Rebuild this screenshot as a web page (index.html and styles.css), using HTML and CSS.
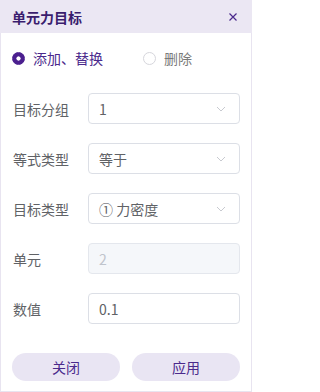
FILE: index.html
```html
<!DOCTYPE html>
<html lang="zh">
<head>
<meta charset="utf-8">
<link rel="stylesheet" href="styles.css">
</head>
<body>
<div class="dialog">
  <div class="header">
    <span class="title">单元力目标</span>
    <svg class="close" width="10" height="10" viewBox="0 0 10 10"><path d="M1.5 1.5L8.5 8.5M8.5 1.5L1.5 8.5" stroke="#4b2a8c" stroke-width="1.2" fill="none"/></svg>
  </div>
  <div class="body">
    <div class="radios">
      <label class="radio checked"><span class="dot"></span><span>添加、替换</span></label>
      <label class="radio"><span class="dot"></span><span>删除</span></label>
    </div>
    <div class="form">
      <div class="row"><span class="label">目标分组</span><div class="input select"><span>1</span><svg class="chev" width="10" height="6" viewBox="0 0 10 6"><path d="M1 1L5 5L9 1" stroke="#c8cad0" stroke-width="1" fill="none"/></svg></div></div>
      <div class="row"><span class="label">等式类型</span><div class="input select"><span>等于</span><svg class="chev" width="10" height="6" viewBox="0 0 10 6"><path d="M1 1L5 5L9 1" stroke="#c8cad0" stroke-width="1" fill="none"/></svg></div></div>
      <div class="row"><span class="label">目标类型</span><div class="input select"><span>① 力密度</span><svg class="chev" width="10" height="6" viewBox="0 0 10 6"><path d="M1 1L5 5L9 1" stroke="#c8cad0" stroke-width="1" fill="none"/></svg></div></div>
      <div class="row"><span class="label">单元</span><div class="input disabled"><span>2</span></div></div>
      <div class="row"><span class="label">数值</span><div class="input"><span>0.1</span></div></div>
    </div>
    <div class="buttons">
      <button class="btn">关闭</button>
      <button class="btn">应用</button>
    </div>
  </div>
</div>
</body>
</html>
```
FILE: styles.css
```css
* { box-sizing: border-box; }
html, body { margin: 0; padding: 0; background: #ffffff; }
body { font-family: "Noto Sans CJK SC", "Noto Sans", sans-serif; font-size: 14px; }
.dialog { width: 252px; height: 392px; display: flex; flex-direction: column; }
.header { height: 33px; background: #ebe7f3; display: flex; align-items: center; justify-content: space-between; padding: 0 14px 0 12px; flex-shrink: 0; }
.title { font-size: 14px; font-weight: 700; color: #3a1d6e; line-height: 1; }
.close { display: block; }
.body { flex: 1; border: 1px solid #e8e4f0; border-top: none; padding: 15px 11px 0 11px; display: flex; flex-direction: column; }
.radios { display: flex; align-items: center; height: 20px; }
.radio { display: flex; align-items: center; gap: 8px; color: #7a7a7a; line-height: 1; }
.radio.checked { color: #4b2a8c; width: 131px; }
.dot { width: 13px; height: 13px; border-radius: 50%; border: 1px solid #d6d6dc; background: #fff; display: block; }
.checked .dot { border-color: #4b1f8f; background: radial-gradient(circle, #ffffff 0 1.8px, #4b1f8f 2.4px); }
.form { display: flex; flex-direction: column; gap: 19px; margin-top: 25px; }
.row { display: flex; align-items: center; height: 31px; }
.label { width: 76px; padding-left: 1px; color: #606266; }
.input { flex: 1; height: 31px; border: 1px solid #dcdfe6; border-radius: 4px; display: flex; align-items: center; justify-content: space-between; padding: 0 13px 0 10px; color: #606266; background: #fff; }
.input.disabled { background: #f5f7fa; border-color: #e4e7ed; color: #c0c4cc; }
.chev { display: block; }
.buttons { display: flex; gap: 12px; margin-top: 29px; }
.btn { flex: 1; height: 28px; border: none; border-radius: 14px; background: #e9e5f3; color: #4b2a8c; font-family: inherit; font-size: 14px; padding: 0; }
```
